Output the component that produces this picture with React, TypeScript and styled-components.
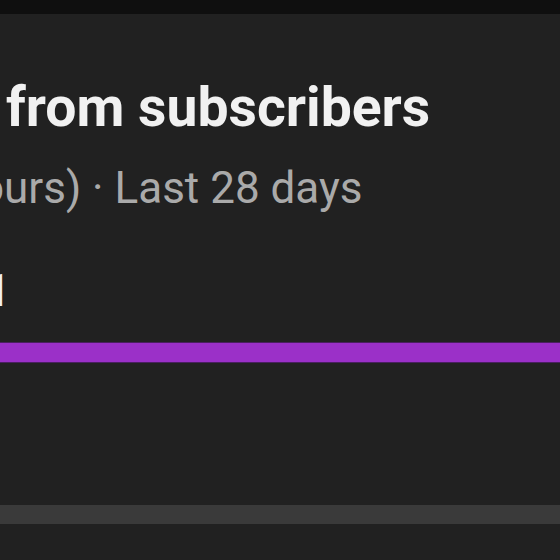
import * as React from 'react';
import styled, { createGlobalStyle } from 'styled-components';

/*!
 * Styles
 */

const GlobalStyle = createGlobalStyle`
  html, body {
    margin: 0;
    padding: 0;
    background: #212121;
  }
  body {
    width: 560px;
    height: 560px;
    overflow: hidden;
    font-family: Roboto, "Noto Sans", "Liberation Sans", sans-serif;
  }
`;

const Screen = styled.div`
  display: flex;
  flex-direction: column;
  width: 560px;
  height: 560px;
  background: #212121;
  overflow: hidden;
`;

const StatusStrip = styled.div`
  flex: 0 0 14px;
  background: #0f0f0f;
`;

const Card = styled.section`
  display: flex;
  flex-direction: column;
`;

// a text line that starts before the left edge of the screen
const Line = styled.div<{ $size: number; $lh: number; $weight: number; $color: string; $top: number; $indent?: number }>`
  display: flex;
  white-space: nowrap;
  margin-top: ${(p) => p.$top}px;
  padding-left: ${(p) => p.$indent ?? 0}px;
  font-size: ${(p) => p.$size}px;
  line-height: ${(p) => p.$lh}px;
  font-weight: ${(p) => p.$weight};
  color: ${(p) => p.$color};
`;

// lead of the line, pushed off the left edge; only its last few px show
const Lead = styled.span<{ $w: number }>`
  display: flex;
  justify-content: flex-end;
  flex: 0 0 ${(p) => p.$w}px;
  width: ${(p) => p.$w}px;
  overflow: hidden;
`;

const Bar = styled.div<{ $color: string; $top: number }>`
  flex: 0 0 19px;
  margin-top: ${(p) => p.$top}px;
  background: ${(p) => p.$color};
`;

const PurpleBar = styled(Bar)`
  box-shadow: 0 -1px 0 #4a2060, 0 1px 0 #4a2060;
`;

/*!
 * Expo
 */

export default function App() {
  return (
    <Screen>
      <GlobalStyle />
      <StatusStrip />
      <Card>
        <Line $size={55.3} $lh={64} $weight={700} $color="#f1f1f1" $top={62} $indent={6}>
          <Lead $w={0}>Watch time&nbsp;</Lead>
          from subscribers
        </Line>
        <Line $size={44} $lh={52} $weight={400} $color="#aaaaaa" $top={22}>
          <Lead $w={4}>Watch time (ho</Lead>
          urs) · Last 28 days
        </Line>
        <Line $size={44} $lh={52} $weight={700} $color="#f1f1f1" $top={51}>
          <Lead $w={10}>12.1</Lead>
        </Line>
        <PurpleBar $color="#9b30c8" $top={26} />
        <Bar $color="#3a3a3a" $top={143} />
      </Card>
    </Screen>
  );
}
